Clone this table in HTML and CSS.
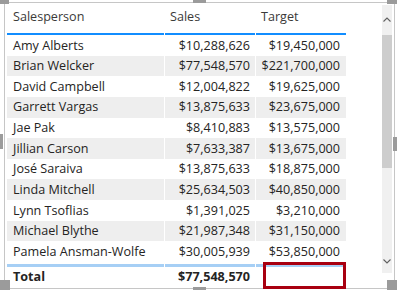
FILE: index.html
```html
<!DOCTYPE html>
<html>
<head>
<meta charset="utf-8">
<link rel="stylesheet" href="styles.css">
</head>
<body>
<div class="visual">
  <span class="handle tl"></span>
  <span class="handle tm"></span>
  <span class="handle tr"></span>
  <span class="handle ml"></span>
  <span class="handle mr"></span>
  <span class="handle bl"></span>
  <span class="handle bm"></span>
  <span class="handle br"></span>
  <div class="frame">
    <div class="table">
      <div class="row head">
        <div class="cell name">Salesperson</div>
        <div class="cell hnum">Sales</div>
        <div class="cell hnum">Target</div>
      </div>
      <div class="row"><div class="cell name">Amy Alberts</div><div class="cell num">$10,288,626</div><div class="cell num t">$19,450,000</div></div>
      <div class="row alt"><div class="cell name">Brian Welcker</div><div class="cell num">$77,548,570</div><div class="cell num t">$221,700,000</div></div>
      <div class="row"><div class="cell name">David Campbell</div><div class="cell num">$12,004,822</div><div class="cell num t">$19,625,000</div></div>
      <div class="row alt"><div class="cell name">Garrett Vargas</div><div class="cell num">$13,875,633</div><div class="cell num t">$23,675,000</div></div>
      <div class="row"><div class="cell name">Jae Pak</div><div class="cell num">$8,410,883</div><div class="cell num t">$13,575,000</div></div>
      <div class="row alt"><div class="cell name">Jillian Carson</div><div class="cell num">$7,633,387</div><div class="cell num t">$13,675,000</div></div>
      <div class="row"><div class="cell name">José Saraiva</div><div class="cell num">$13,875,633</div><div class="cell num t">$18,875,000</div></div>
      <div class="row alt"><div class="cell name">Linda Mitchell</div><div class="cell num">$25,634,503</div><div class="cell num t">$40,850,000</div></div>
      <div class="row"><div class="cell name">Lynn Tsoflias</div><div class="cell num">$1,391,025</div><div class="cell num t">$3,210,000</div></div>
      <div class="row alt"><div class="cell name">Michael Blythe</div><div class="cell num">$21,987,348</div><div class="cell num t">$31,150,000</div></div>
      <div class="row"><div class="cell name">Pamela Ansman-Wolfe</div><div class="cell num">$30,005,939</div><div class="cell num t">$53,850,000</div></div>
      <div class="row total">
        <div class="cell name">Total</div>
        <div class="cell num">$77,548,570</div>
        <div class="cell num t"><span class="highlight"></span></div>
      </div>
    </div>
    <div class="scrollbar">
      <div class="arrow up"><svg width="8" height="5" viewBox="0 0 8 5"><path d="M0.5 4.5 L4 1 L7.5 4.5" fill="none" stroke="#606060" stroke-width="1.1"/></svg></div>
      <div class="track"><div class="thumb"></div></div>
      <div class="arrow down"><svg width="8" height="5" viewBox="0 0 8 5"><path d="M0.5 0.5 L4 4 L7.5 0.5" fill="none" stroke="#606060" stroke-width="1.1"/></svg></div>
    </div>
  </div>
</div>
</body>
</html>
```
FILE: styles.css
```css
html, body {
  margin: 0;
  padding: 0;
  background: #ffffff;
}
body {
  width: 397px;
  height: 290px;
  overflow: hidden;
  font-family: "Open Sans", "Noto Sans", sans-serif;
  font-size: 12.6px;
  color: #252423;
}
.visual {
  position: relative;
  width: 397px;
  height: 290px;
  padding: 2px 0 0 4px;
  box-sizing: border-box;
}
.handle {
  position: absolute;
  background: #9b9b9b;
}
.handle.tl { left: 0; top: 0; width: 9px; height: 4px; }
.handle.tm { left: 193px; top: 0; width: 13px; height: 3px; }
.handle.tr { right: 0; top: 0; width: 10px; height: 4px; }
.handle.ml { left: 0; top: 134px; width: 3px; height: 15px; }
.handle.mr { right: 0; top: 137px; width: 4px; height: 14px; }
.handle.bl { left: 0; bottom: 0; width: 10px; height: 10px; }
.handle.bm { left: 193px; bottom: 0; width: 13px; height: 3px; }
.handle.br { right: 0; bottom: 0; width: 10px; height: 10px; }

.frame {
  width: 391px;
  height: 287px;
  box-sizing: border-box;
  border: 1px solid #c6c6c6;
  display: flex;
  justify-content: space-between;
  align-items: flex-start;
  padding: 0 2px 0 2px;
}
.table {
  width: 339px;
  display: flex;
  flex-direction: column;
}
.row {
  display: grid;
  grid-template-columns: 157px 90px 90px;
  column-gap: 1px;
  height: 20.65px;
}
.cell {
  display: flex;
  align-items: center;
  white-space: nowrap;
  line-height: 1;
  box-sizing: border-box;
  padding-top: 1px;
}
.cell.name { padding-left: 6px; }
.cell.num { justify-content: flex-end; padding-right: 5px; }
.cell.num.t { padding-right: 6px; }
.row.alt .cell { background: #eeeeee; }

.row.head { height: 32px; }
.row.head .cell {
  border-bottom: 2px solid #118dff;
  color: #3b3a39;
  padding-top: 0;
  padding-bottom: 1px;
}
.cell.hnum { padding-left: 5px; }

.row.total {
  margin-top: 1.6px;
  height: 23px;
  font-weight: 700;
}
.row.total .cell {
  border-top: 3px solid #a6cff5;
  padding-top: 1px;
}
.row.total .cell.t { position: relative; }
.highlight {
  position: absolute;
  left: 7px;
  right: 0;
  top: -5px;
  bottom: -2px;
  border: 3px solid #a80010;
}

.scrollbar {
  width: 10px;
  margin-top: 2px;
  height: 268px;
  background: #f0f0f0;
  display: flex;
  flex-direction: column;
  align-items: stretch;
}
.arrow {
  height: 27px;
  display: flex;
  align-items: center;
  justify-content: center;
}
.arrow.up { align-items: flex-start; padding-top: 12px; box-sizing: border-box; }
.arrow.down { align-items: flex-end; padding-bottom: 9px; box-sizing: border-box; }
.track { flex: 1; }
.thumb {
  margin-top: 3px;
  height: 133px;
  background: #cdcdcd;
}
```
